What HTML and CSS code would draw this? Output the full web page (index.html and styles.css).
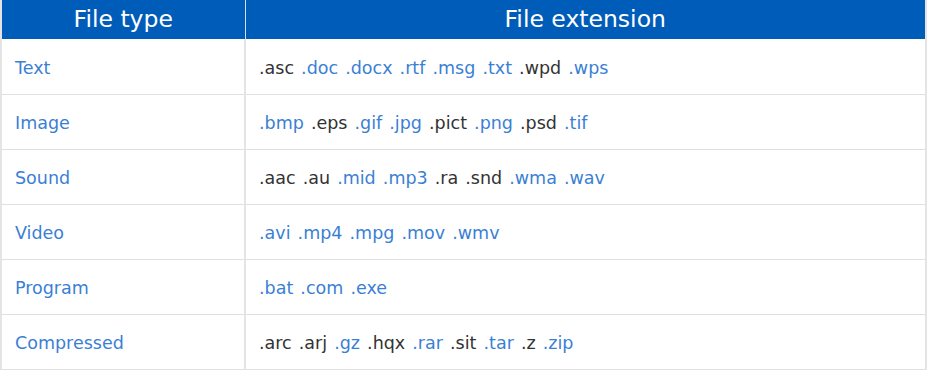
FILE: index.html
```html
<!DOCTYPE html>
<html lang="en">
<head>
    <meta charset="utf-8" />
    <title>File types</title>
    <link rel="stylesheet" href="styles.css">
</head>
<body>
    <table class="ext-table">
        <thead>
            <tr>
                <th class="col-type">File type</th>
                <th>File extension</th>
            </tr>
        </thead>
        <tbody>
            <tr>
                <td class="type">Text</td>
                <td>.asc <span class="link">.doc</span> <span class="link">.docx</span> <span class="link">.rtf</span> <span class="link">.msg</span> <span class="link">.txt</span> .wpd <span class="link">.wps</span></td>
            </tr>
            <tr>
                <td class="type">Image</td>
                <td><span class="link">.bmp</span> .eps <span class="link">.gif</span> <span class="link">.jpg</span> .pict <span class="link">.png</span> .psd <span class="link">.tif</span></td>
            </tr>
            <tr>
                <td class="type">Sound</td>
                <td>.aac .au <span class="link">.mid</span> <span class="link">.mp3</span> .ra .snd <span class="link">.wma</span> <span class="link">.wav</span></td>
            </tr>
            <tr>
                <td class="type">Video</td>
                <td><span class="link">.avi</span> <span class="link">.mp4</span> <span class="link">.mpg</span> <span class="link">.mov</span> <span class="link">.wmv</span></td>
            </tr>
            <tr>
                <td class="type">Program</td>
                <td><span class="link">.bat</span> <span class="link">.com</span> <span class="link">.exe</span></td>
            </tr>
            <tr>
                <td class="type">Compressed</td>
                <td>.arc .arj <span class="link">.gz</span> .hqx <span class="link">.rar</span> .sit <span class="link">.tar</span> .z <span class="link">.zip</span></td>
            </tr>
        </tbody>
    </table>
</body>
</html>
```

FILE: styles.css
```css
* {
    margin: 0;
    padding: 0;
    box-sizing: border-box;
}

body {
    font-family: 'DejaVu Sans', Verdana, sans-serif;
    background: #ffffff;
    color: #333333;
}

.ext-table {
    width: 927px;
    border-collapse: collapse;
    border-left: 2px solid #e4e4e4;
    border-right: 2px solid #e4e4e4;
}

.ext-table th {
    background: #005cb9;
    color: #ffffff;
    font-weight: normal;
    font-size: 23.5px;
    height: 39px;
    text-align: center;
    border-left: 1px solid #cfe0f2;
    border-bottom: 1px solid #ffffff;
}

.ext-table th:first-child {
    border-left: none;
}

.ext-table .col-type {
    width: 244px;
}

.ext-table td {
    height: 55px;
    padding: 2px 13px 0;
    font-size: 17.5px;
    word-spacing: 1.5px;
    border-bottom: 1px solid #e0e0e0;
    border-left: 2px solid #e4e4e4;
    vertical-align: middle;
}

.ext-table td:first-child {
    border-left: none;
}

.type,
.link {
    color: #3b7fd5;
}
```
